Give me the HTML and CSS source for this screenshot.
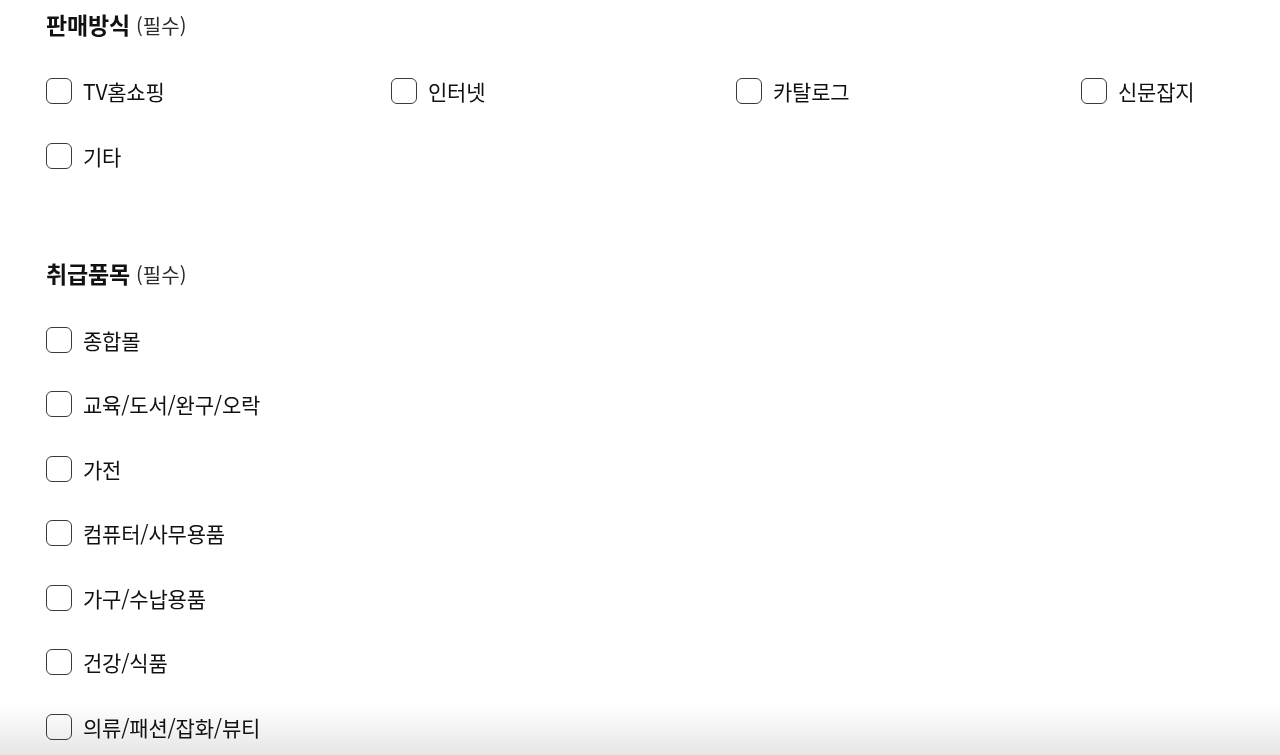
FILE: index.html
```html
<!DOCTYPE html>
<html lang="ko">
<head>
    <meta charset="UTF-8">
    <meta name="viewport" content="width=device-width, initial-scale=1.0">
    <title>판매방식 / 취급품목</title>
    <link rel="stylesheet" href="styles.css">
</head>
<body>
    <div class="formWrapper">
        <section class="field">
            <h2 class="field-title">판매방식 <span class="required">(필수)</span></h2>
            <div class="options options-grid">
                <label class="option"><input type="checkbox"><span class="box"></span><span class="text">TV홈쇼핑</span></label>
                <label class="option"><input type="checkbox"><span class="box"></span><span class="text">인터넷</span></label>
                <label class="option"><input type="checkbox"><span class="box"></span><span class="text">카탈로그</span></label>
                <label class="option"><input type="checkbox"><span class="box"></span><span class="text">신문잡지</span></label>
                <label class="option"><input type="checkbox"><span class="box"></span><span class="text">기타</span></label>
            </div>
        </section>

        <section class="field">
            <h2 class="field-title">취급품목 <span class="required">(필수)</span></h2>
            <div class="options">
                <label class="option"><input type="checkbox"><span class="box"></span><span class="text">종합몰</span></label>
                <label class="option"><input type="checkbox"><span class="box"></span><span class="text">교육/도서/완구/오락</span></label>
                <label class="option"><input type="checkbox"><span class="box"></span><span class="text">가전</span></label>
                <label class="option"><input type="checkbox"><span class="box"></span><span class="text">컴퓨터/사무용품</span></label>
                <label class="option"><input type="checkbox"><span class="box"></span><span class="text">가구/수납용품</span></label>
                <label class="option"><input type="checkbox"><span class="box"></span><span class="text">건강/식품</span></label>
                <label class="option"><input type="checkbox"><span class="box"></span><span class="text">의류/패션/잡화/뷰티</span></label>
            </div>
        </section>
    </div>

    <div class="bottomFade"></div>
</body>
</html>
```

FILE: styles.css
```css
html {
    background: #ffffff;
}

body {
    margin: 0;
    font-family: "Noto Sans CJK KR", "Noto Sans", sans-serif;
    color: #111111;
    overflow: hidden;
}

.formWrapper {
    padding: 9px 46px 0;
}

.field + .field {
    margin-top: 89px;
}

.field-title {
    margin: 0;
    font-size: 23px;
    font-weight: 700;
    line-height: 30px;
    letter-spacing: -0.2px;
}

.required {
    font-size: 20px;
    font-weight: 400;
    color: #2a2a2a;
    letter-spacing: 0;
}

.options {
    margin-top: 37px;
    display: grid;
    grid-template-columns: 345px;
    row-gap: 38.5px;
}

.options-grid {
    grid-template-columns: repeat(3, 345px) 1fr;
}

.option {
    display: flex;
    align-items: center;
    height: 26px;
    gap: 11px;
    cursor: pointer;
}

/* hide native input, draw our own box */
.option input {
    display: none;
}

.box {
    width: 26px;
    height: 26px;
    box-sizing: border-box;
    border: 1.5px solid #3a3a3a;
    border-radius: 6px;
    flex-shrink: 0;
}

.option input:checked + .box {
    background: #111111;
}

.text {
    font-size: 21px;
    line-height: 26px;
    letter-spacing: -0.2px;
}

/* soft shade at the bottom of the window, under the content */
.bottomFade {
    position: fixed;
    left: 0;
    right: 0;
    bottom: 0;
    height: 52px;
    z-index: -1;
    background: linear-gradient(to bottom, #ffffff, #e6e6e6);
    pointer-events: none;
}
```
